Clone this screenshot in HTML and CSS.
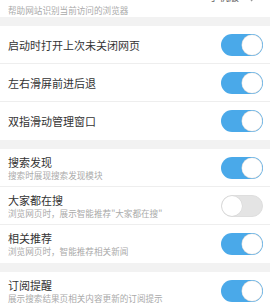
FILE: index.html
```html
<!DOCTYPE html>
<html lang="zh-CN">
<head>
<meta charset="utf-8">
<link rel="stylesheet" href="styles.css">
</head>
<body>
<div class="page">
  <div class="top">
    <div class="top-sub">帮助网站识别当前访问的浏览器</div>
    <div class="top-value">手机版<svg class="chev" width="10" height="10" viewBox="0 0 10 10"><path d="M3 1 L7 5 L3 9" fill="none" stroke="#999" stroke-width="1.3"/></svg></div>
  </div>
  <div class="gap"></div>
  <div class="group">
    <div class="row"><div class="text"><div class="title">启动时打开上次未关闭网页</div></div><div class="switch on"><div class="knob"></div></div></div>
    <div class="row"><div class="text"><div class="title">左右滑屏前进后退</div></div><div class="switch on"><div class="knob"></div></div></div>
    <div class="row last"><div class="text"><div class="title">双指滑动管理窗口</div></div><div class="switch on"><div class="knob"></div></div></div>
  </div>
  <div class="gap"></div>
  <div class="group">
    <div class="row"><div class="text"><div class="title">搜索发现</div><div class="sub">搜索时展现搜索发现模块</div></div><div class="switch on"><div class="knob"></div></div></div>
    <div class="row"><div class="text"><div class="title">大家都在搜</div><div class="sub">浏览网页时，展示智能推荐"大家都在搜"</div></div><div class="switch off"><div class="knob"></div></div></div>
    <div class="row last"><div class="text"><div class="title">相关推荐</div><div class="sub">浏览网页时，智能推荐相关新闻</div></div><div class="switch on"><div class="knob"></div></div></div>
  </div>
  <div class="gap"></div>
  <div class="group">
    <div class="row last"><div class="text"><div class="title">订阅提醒</div><div class="sub">展示搜索结果页相关内容更新的订阅提示</div></div><div class="switch on"><div class="knob"></div></div></div>
  </div>
</div>
</body>
</html>
```

FILE: styles.css
```css
* { box-sizing: border-box; }
html, body {
  margin: 0;
  padding: 0;
  background: #f2f2f2;
}
body {
  width: 270px;
  height: 308px;
  overflow: hidden;
  font-family: "Noto Sans CJK SC", "Noto Sans", sans-serif;
}
.page {
  display: flex;
  flex-direction: column;
}
.top {
  height: 17px;
  background: #fff;
  display: flex;
  justify-content: space-between;
  align-items: flex-start;
  padding: 0 12px 0 8px;
  overflow: visible;
}
.top-sub {
  font-size: 8.6px;
  line-height: 12px;
  color: #aaa;
  margin-top: 4px;
}
.top-value {
  font-size: 10px;
  line-height: 14px;
  color: #666;
  margin-top: -10px;
  display: flex;
  align-items: center;
  gap: 9px;
}
.gap {
  height: 9px;
  background: #f2f2f2;
}
.group {
  background: #fff;
  display: flex;
  flex-direction: column;
}
.row {
  height: 38px;
  display: flex;
  align-items: center;
  justify-content: space-between;
  padding: 0 7px 0 8px;
  border-bottom: 1px solid #eeeeee;
}
.row.last {
  border-bottom: none;
}
.text {
  display: flex;
  flex-direction: column;
}
.title {
  font-size: 11px;
  line-height: 14px;
  color: #333;
}
.sub {
  font-size: 8.6px;
  line-height: 12px;
  color: #aaa;
}
.switch {
  width: 42px;
  height: 22px;
  border-radius: 11px;
  padding: 1px;
  display: flex;
  align-items: center;
}
.switch.on {
  background: #4aa9e9;
  justify-content: flex-end;
}
.switch.off {
  background: #e4e4e4;
  border: 1px solid #dedede;
  padding: 0;
  justify-content: flex-start;
}
.knob {
  width: 20px;
  height: 20px;
  border-radius: 50%;
  background: #fff;
  box-shadow: 0 0 0 0.5px #d6d6d6;
}
```
